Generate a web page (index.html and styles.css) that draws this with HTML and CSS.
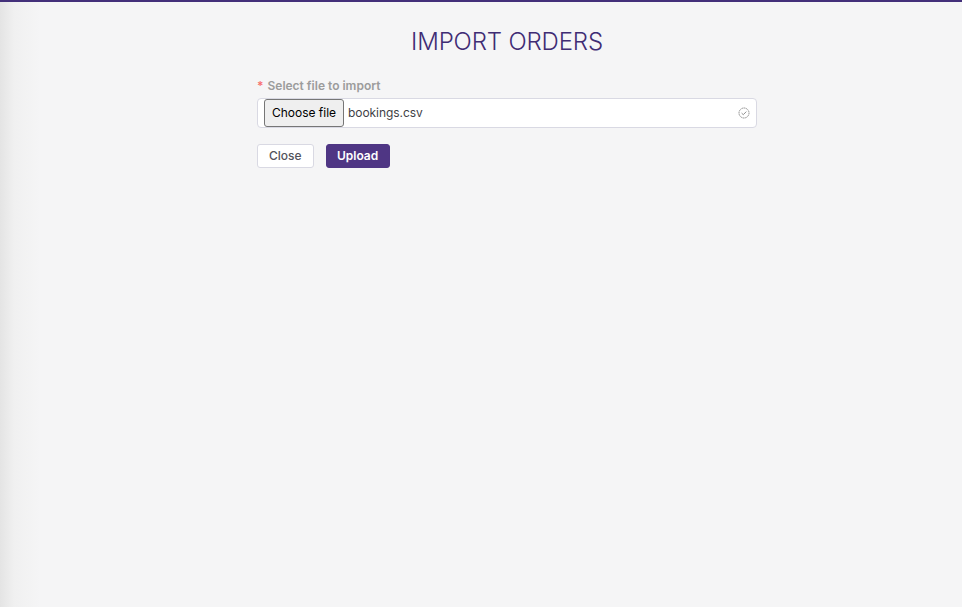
FILE: index.html
```html
<!DOCTYPE html>
<html lang="en">
<head>
  <meta charset="UTF-8" />
  <meta name="viewport" content="width=device-width, initial-scale=1.0" />
  <title>Import Orders</title>
  <link rel="stylesheet" href="styles.css">
</head>
<body>
  <div class="container">
    <h1>IMPORT ORDERS</h1>
    <form class="import-form">
      <label class="field-label"><span class="required">*</span>Select file to import</label>
      <div class="file-field">
        <button type="button" class="file-button">Choose file</button>
        <span class="file-name">bookings.csv</span>
        <svg class="check-icon" width="12" height="12" viewBox="0 0 12 12" fill="none" stroke="#8f8f8f" stroke-width="1">
          <circle cx="6" cy="6" r="5" stroke-dasharray="1.4 0.5"/>
          <path d="M3.6 6.1l1.7 1.6 3-3.1"/>
        </svg>
      </div>
      <div class="actions">
        <button type="button" class="btn">Close</button>
        <button type="button" class="btn btn-primary">Upload</button>
      </div>
    </form>
  </div>
</body>
</html>
```

FILE: styles.css
```css
html, body {
  height: 100%;
}
body {
  margin: 0;
  box-sizing: border-box;
  border-top: 2px solid #43307a;
  background: linear-gradient(to right, #e4e4e4 0, #f0f0f0 14px, #f5f5f6 40px);
  font-family: 'Inter', sans-serif;
  overflow: hidden;
}
.container {
  width: 500px;
  margin-left: 257px;
}
h1 {
  margin: 25px 0 0;
  font-size: 24px;
  line-height: 29px;
  font-weight: 300;
  letter-spacing: -0.15px;
  text-align: center;
  color: #3f2c74;
}
.import-form {
  margin-top: 22px;
}
.field-label {
  display: block;
  font-size: 12px;
  line-height: 16px;
  font-weight: 600;
  color: #9c9c9c;
}
.required {
  color: #f87171;
  margin-right: 4px;
}
.file-field {
  display: flex;
  align-items: center;
  box-sizing: border-box;
  height: 30px;
  margin-top: 4px;
  padding: 0 6px;
  background: #fff;
  border: 1px solid #d9d9e3;
  border-radius: 4px;
}
.file-button {
  box-sizing: border-box;
  width: 80px;
  height: 28px;
  padding: 0 0 1px;
  font-family: inherit;
  font-size: 12px;
  color: #000;
  background: #efefef;
  border: 1px solid #767676;
  border-radius: 3px;
}
.file-name {
  margin-left: 4px;
  padding-bottom: 1px;
  font-size: 12px;
  letter-spacing: -0.05px;
  color: #3f3f46;
}
.check-icon {
  margin-left: auto;
}
.actions {
  display: flex;
  gap: 12px;
  margin-top: 16px;
}
.btn {
  box-sizing: border-box;
  height: 24px;
  padding: 0 11px 1px;
  font-family: inherit;
  font-size: 12px;
  font-weight: 500;
  color: #52525b;
  background: #fff;
  border: 1px solid #d9d9e3;
  border-radius: 3px;
}
.btn-primary {
  width: 64px;
  padding: 0 0 1px;
  color: #fff;
  font-weight: 600;
  background: #4f3684;
  border-color: #4f3684;
}
```
